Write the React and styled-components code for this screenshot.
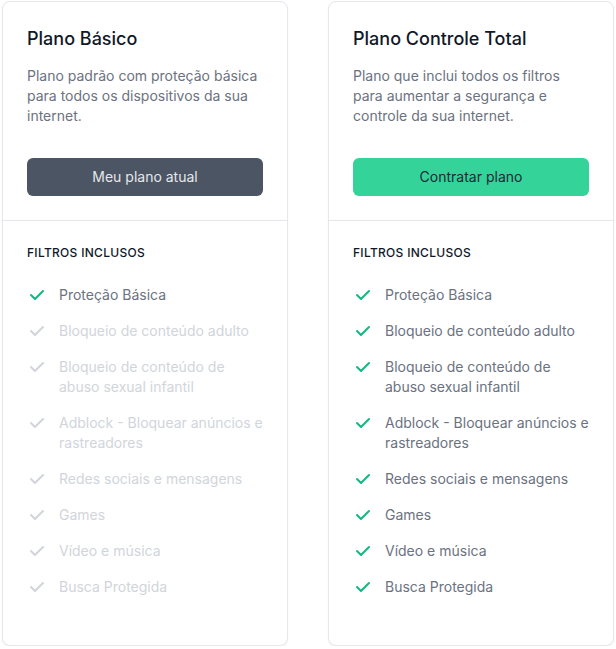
import React from 'react';
import styled, { createGlobalStyle, css } from 'styled-components';

const GlobalStyle = createGlobalStyle`
  * { box-sizing: border-box; }
  body {
    margin: 0;
    background: #ffffff;
    font-family: Inter, "Noto Sans", sans-serif;
    -webkit-font-smoothing: antialiased;
  }
`;

const Grid = styled.div`
  display: grid;
  grid-template-columns: 286px 286px;
  gap: 40px;
  justify-content: center;
  padding-top: 1px;
`;

const Card = styled.div`
  border: 1px solid #e5e7eb;
  border-radius: 8px;
  box-shadow: 0 1px 2px 0 rgba(0, 0, 0, 0.05);
  background: #fff;
`;

const Top = styled.div`
  padding: 25px 24px 24px;
  border-bottom: 1px solid #e5e7eb;
`;

const Title = styled.h2`
  margin: 0;
  font-size: 18px;
  line-height: 24px;
  font-weight: 500;
  color: #111827;
`;

const Description = styled.p`
  margin: 15px 0 0;
  font-size: 14px;
  line-height: 20px;
  color: #6b7280;
`;

const PlanButton = styled.a`
  display: block;
  margin-top: 32px;
  width: 100%;
  padding: 8px 0;
  border: 1px solid transparent;
  border-radius: 6px;
  text-align: center;
  font-size: 14px;
  line-height: 20px;
  font-weight: 400;
  text-decoration: none;
  background: #4b5563;
  color: #e5e7eb;

  ${props => props.$primary && css`
    background: #34d399;
    color: #1f2937;
  `}
`;

const Bottom = styled.div`
  padding: 24px 24px 48px;
`;

const SectionTitle = styled.h3`
  margin: 0;
  font-size: 12px;
  line-height: 16px;
  font-weight: 500;
  letter-spacing: 0.025em;
  text-transform: uppercase;
  color: #111827;
`;

const FeatureList = styled.ul`
  list-style: none;
  margin: 24px 0 0;
  padding: 0;
  display: flex;
  flex-direction: column;
  gap: 16px;
`;

const Feature = styled.li`
  display: flex;
  gap: 12px;
  font-size: 14px;
  line-height: 20px;
  color: ${props => (props.$enabled ? '#6b7280' : '#d1d5db')};

  svg {
    flex-shrink: 0;
    width: 20px;
    height: 20px;
    color: ${props => (props.$enabled ? '#10b981' : '#d1d5db')};
  }
`;

const CheckIcon = () => (
  <svg viewBox="0 0 20 20" fill="currentColor" aria-hidden="true">
    <path
      fillRule="evenodd"
      d="M16.707 5.293a1 1 0 010 1.414l-8 8a1 1 0 01-1.414 0l-4-4a1 1 0 011.414-1.414L8 12.586l7.293-7.293a1 1 0 011.414 0z"
      clipRule="evenodd"
    />
  </svg>
);

const filters = [
  'Proteção Básica',
  'Bloqueio de conteúdo adulto',
  'Bloqueio de conteúdo de abuso sexual infantil',
  'Adblock - Bloquear anúncios e rastreadores',
  'Redes sociais e mensagens',
  'Games',
  'Vídeo e música',
  'Busca Protegida',
];

const plans = [
  {
    name: 'Plano Básico',
    description: 'Plano padrão com proteção básica para todos os dispositivos da sua internet.',
    cta: 'Meu plano atual',
    primary: false,
    included: 1,
  },
  {
    name: 'Plano Controle Total',
    description: 'Plano que inclui todos os filtros para aumentar a segurança e controle da sua internet.',
    cta: 'Contratar plano',
    primary: true,
    included: filters.length,
  },
];

export default function App() {
  return (
    <>
      <GlobalStyle />
      <Grid>
        {plans.map(plan => (
          <Card key={plan.name}>
            <Top>
              <Title>{plan.name}</Title>
              <Description>{plan.description}</Description>
              <PlanButton href="#" $primary={plan.primary}>{plan.cta}</PlanButton>
            </Top>
            <Bottom>
              <SectionTitle>Filtros inclusos</SectionTitle>
              <FeatureList>
                {filters.map((f, i) => (
                  <Feature key={f} $enabled={i < plan.included}>
                    <CheckIcon />
                    <span>{f}</span>
                  </Feature>
                ))}
              </FeatureList>
            </Bottom>
          </Card>
        ))}
      </Grid>
    </>
  );
}
